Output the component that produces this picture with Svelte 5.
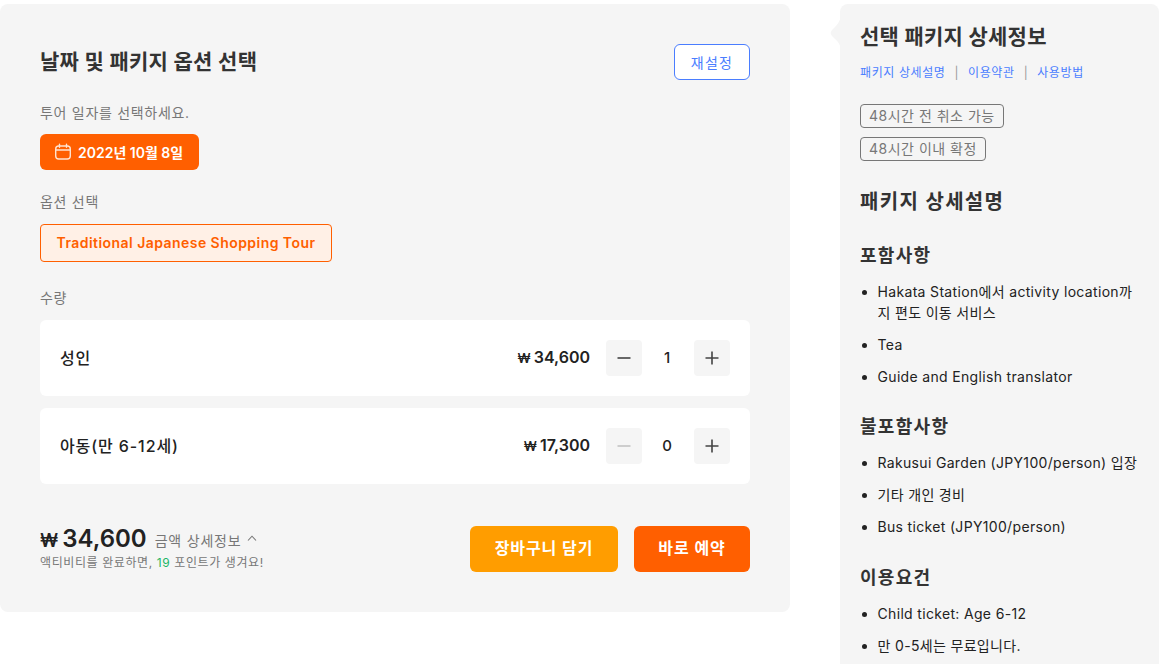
<script lang="ts">
  let rows = [
    { label: '성인', price: '34,600', qty: 1 },
    { label: '아동(만 6-12세)', price: '17,300', qty: 0 },
  ];
  let tabs = ['패키지 상세설명', '이용약관', '사용방법'];
  let badges = ['48시간 전 취소 가능', '48시간 이내 확정'];
  let sections = [
    { title: '포함사항', items: ['Hakata Station에서 activity location까지 편도 이동 서비스', 'Tea', 'Guide and English translator'] },
    { title: '불포함사항', items: ['Rakusui Garden (JPY100/person) 입장', '기타 개인 경비', 'Bus ticket (JPY100/person)'] },
    { title: '이용요건', items: ['Child ticket: Age 6-12', '만 0-5세는 무료입니다.'] },
  ];
</script>

<div class="page">
  <main class="booking">
    <header class="head">
      <h2>날짜 및 패키지 옵션 선택</h2>
      <button class="reset">재설정</button>
    </header>

    <div class="label first">투어 일자를 선택하세요.</div>
    <button class="date">
      <svg width="18" height="18" viewBox="0 0 18 18" fill="none" stroke="#ffe3d0" stroke-width="1.4" stroke-linecap="round">
        <rect x="1.7" y="3" width="14.6" height="13" rx="3" />
        <path d="M1.7 7h14.6M5.5 1.2v3M12.5 1.2v3" />
      </svg>
      2022년 10월 8일
    </button>

    <div class="label option-label">옵션 선택</div>
    <button class="option">Traditional Japanese Shopping Tour</button>

    <div class="label qty-label">수량</div>
    <div class="rows">
      {#each rows as row}
        <div class="row">
          <span class="name">{row.label}</span>
          <span class="price"><span class="won">₩</span>{row.price}</span>
          <div class="stepper">
            <span class="step" class:off={row.qty === 0}>
              <svg width="14" height="14" viewBox="0 0 14 14"><path d="M0.5 7h13" stroke="currentColor" stroke-width="1.6" /></svg>
            </span>
            <span class="qty">{row.qty}</span>
            <span class="step">
              <svg width="14" height="14" viewBox="0 0 14 14"><path d="M0.5 7h13M7 0.5v13" stroke="currentColor" stroke-width="1.6" /></svg>
            </span>
          </div>
        </div>
      {/each}
    </div>

    <footer class="foot">
      <div class="sum">
        <div class="total-line">
          <span class="total"><span class="won">₩</span>34,600</span>
          <span class="detail">금액 상세정보</span>
          <svg width="10" height="6" viewBox="0 0 10 6" fill="none" stroke="#777" stroke-width="1.1"><path d="M1 5.5 5 1.2l4 4.3" /></svg>
        </div>
        <div class="points">액티비티를 완료하면, <b>19</b> 포인트가 생겨요!</div>
      </div>
      <div class="actions">
        <button class="cta cart">장바구니 담기</button>
        <button class="cta now">바로 예약</button>
      </div>
    </footer>
  </main>

  <aside class="details">
    <svg class="notch" width="12" height="40" viewBox="0 0 12 40"><path d="M12 0C12 9 9 12 4 17 1 20 1 22 4 25 9 30 12 32 12 40Z" fill="#f5f5f5" /></svg>
    <h2>선택 패키지 상세정보</h2>
    <nav class="tabs">
      {#each tabs as tab, i}
        {#if i > 0}<span class="sep">|</span>{/if}
        <span>{tab}</span>
      {/each}
    </nav>
    <div class="badges">
      {#each badges as badge}
        <span class="badge">{badge}</span>
      {/each}
    </div>
    <h3 class="pack">패키지 상세설명</h3>
    {#each sections as section}
      <h4>{section.title}</h4>
      <ul>
        {#each section.items as item}
          <li>{item}</li>
        {/each}
      </ul>
    {/each}
  </aside>
</div>

<style>
  :global(body) {
    margin: 0;
    background: #fff;
    overflow: hidden;
  }

  .page {
    display: flex;
    align-items: flex-start;
    gap: 50px;
    height: 660px;
    padding-top: 4px;
    overflow: hidden;
    font-family: "Inter", "Noto Sans CJK KR", sans-serif;
    color: #222;
  }

  button {
    font-family: inherit;
    cursor: pointer;
  }

  .booking {
    box-sizing: border-box;
    flex: 0 0 790px;
    height: 608px;
    padding: 40px;
    background: #f5f5f5;
    border-radius: 8px;
  }

  .head {
    display: flex;
    justify-content: space-between;
    align-items: center;
    height: 36px;
  }

  h2 {
    margin: 0;
    font-size: 21px;
    font-weight: 600;
    line-height: 34px;
    letter-spacing: 0.2px;
    color: #333;
  }

  .reset {
    width: 76px;
    height: 36px;
    padding: 0;
    border: 1px solid #4a7dff;
    border-radius: 6px;
    background: #fff;
    color: #4a7dff;
    font-size: 14px;
    letter-spacing: 1.3px;
  }

  .label {
    font-size: 14px;
    line-height: 20px;
    letter-spacing: 0.7px;
    color: #777;
  }

  .first { margin-top: 23px; }
  .option-label { margin-top: 22px; }
  .qty-label { margin-top: 26px; }

  .date {
    display: flex;
    align-items: center;
    gap: 6px;
    margin-top: 11px;
    height: 36px;
    width: 159px;
    padding: 0 0 0 14px;
    border: 0;
    border-radius: 6px;
    background: #ff5f00;
    color: #fff;
    font-size: 14px;
    font-weight: 600;
  }

  .option {
    display: block;
    margin-top: 12px;
    width: 292px;
    height: 38px;
    padding: 0 0 2px;
    border: 1px solid #ff5f00;
    border-radius: 4px;
    background: #fff0e6;
    color: #ff5f00;
    font-size: 14px;
    font-weight: 600;
    letter-spacing: 0.45px;
  }

  .rows {
    display: flex;
    flex-direction: column;
    gap: 12px;
    margin-top: 12px;
  }

  .row {
    display: flex;
    align-items: center;
    height: 76px;
    padding: 0 20px;
    background: #fff;
    border-radius: 6px;
  }

  .name {
    flex: 1;
    margin-bottom: 2px;
    font-size: 16px;
    font-weight: 500;
    letter-spacing: 0.9px;
  }

  .price {
    margin: 0 16px 2px 0;
    font-size: 16px;
    font-weight: 600;
  }

  .price .won {
    margin-right: 3px;
    font-size: 13px;
  }

  .stepper {
    display: flex;
    align-items: center;
  }

  .step {
    display: flex;
    align-items: center;
    justify-content: center;
    width: 36px;
    height: 36px;
    border-radius: 4px;
    background: #f5f5f5;
    color: #444;
  }

  .step.off { color: #c4c4c4; }

  .qty {
    width: 52px;
    margin-bottom: 2px;
    padding-right: 2px;
    box-sizing: border-box;
    text-align: center;
    font-size: 15px;
    font-weight: 500;
  }

  .foot {
    display: flex;
    justify-content: space-between;
    align-items: center;
    margin-top: 40px;
  }

  .sum { padding-bottom: 2px; }

  .total-line {
    display: flex;
    align-items: center;
    height: 28px;
  }

  .total {
    font-size: 24px;
    font-weight: 600;
    color: #222;
  }

  .total .won {
    margin-right: 4px;
    font-size: 18px;
  }

  .detail {
    margin: 3px 6px 0 8px;
    font-size: 14px;
    letter-spacing: 0.8px;
    color: #777;
  }

  .points {
    margin-top: 2px;
    font-size: 12px;
    line-height: 18px;
    letter-spacing: 0.6px;
    color: #777;
  }

  .points b {
    font-weight: 400;
    color: #22b566;
  }

  .actions {
    display: flex;
    gap: 16px;
  }

  .cta {
    height: 46px;
    padding: 0 0 4px;
    border: 0;
    border-radius: 6px;
    color: #fff;
    font-size: 16px;
    font-weight: 600;
    letter-spacing: 0.9px;
  }

  .cart { width: 148px; background: #ff9d00; }
  .now { width: 116px; background: #ff5f00; }

  .details {
    position: relative;
    box-sizing: border-box;
    flex: 1;
    min-width: 0;
    height: 700px;
    padding: 16px 16px 0 20px;
    background: #f5f5f5;
    border-radius: 8px 8px 0 0;
  }

  .notch {
    position: absolute;
    left: -11px;
    top: 8px;
  }

  .tabs {
    display: flex;
    gap: 9px;
    margin-top: 10px;
    font-size: 12px;
    line-height: 18px;
    letter-spacing: 0.6px;
    color: #4a7dff;
  }

  .sep { color: #999; }

  .badges {
    display: flex;
    flex-direction: column;
    align-items: flex-start;
    gap: 9px;
    margin-top: 22px;
  }

  .badge {
    box-sizing: border-box;
    height: 24px;
    padding: 0 8px;
    border: 1px solid #777;
    border-radius: 4px;
    font-size: 14px;
    line-height: 22px;
    letter-spacing: 0.5px;
    color: #777;
  }

  h3, h4 {
    margin: 0;
    font-weight: 600;
    line-height: 28px;
    color: #333;
  }

  h3 {
    font-size: 20px;
    letter-spacing: 1.3px;
  }

  h4 {
    font-size: 18px;
    letter-spacing: 1.3px;
    margin-top: 26px;
  }

  .pack { margin-top: 27px; }

  ul {
    margin: 12px 0 0;
    padding: 0 0 0 17.5px;
    font-size: 14px;
    line-height: 20.5px;
    letter-spacing: 0.33px;
    color: #222;
  }

  li { margin-bottom: 11.5px; }
</style>
